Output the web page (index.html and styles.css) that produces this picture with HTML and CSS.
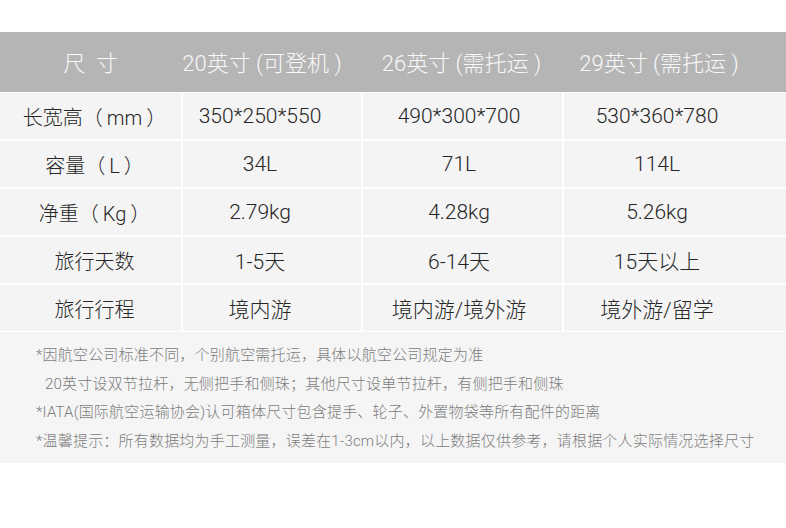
FILE: index.html
```html
<!DOCTYPE html>
<html lang="zh-CN">
<head>
<meta charset="utf-8">
<title>尺寸表</title>
<link rel="stylesheet" href="styles.css">
</head>
<body>
<div class="page">
  <div class="head">
    <div class="hc c1">尺&nbsp;&nbsp;寸</div>
    <div class="hc c2">20英寸 (可登机 )</div>
    <div class="hc c3">26英寸 (需托运 )</div>
    <div class="hc c4">29英寸 (需托运 )</div>
  </div>
  <div class="grid">
    <div class="cell c1">长宽高（&thinsp;mm&thinsp;）</div>
    <div class="cell c2">350*250*550</div>
    <div class="cell c3">490*300*700</div>
    <div class="cell c4">530*360*780</div>

    <div class="cell c1">容量（&thinsp;L&thinsp;）</div>
    <div class="cell c2">34L</div>
    <div class="cell c3">71L</div>
    <div class="cell c4">114L</div>

    <div class="cell c1">净重（&thinsp;Kg&thinsp;）</div>
    <div class="cell c2">2.79kg</div>
    <div class="cell c3">4.28kg</div>
    <div class="cell c4">5.26kg</div>

    <div class="cell c1">旅行天数</div>
    <div class="cell c2">1-5天</div>
    <div class="cell c3">6-14天</div>
    <div class="cell c4">15天以上</div>

    <div class="cell c1">旅行行程</div>
    <div class="cell c2">境内游</div>
    <div class="cell c3">境内游/境外游</div>
    <div class="cell c4">境外游/留学</div>
  </div>
  <div class="notes">
    <p>*因航空公司标准不同，个别航空需托运，具体以航空公司规定为准</p>
    <p class="indent">20英寸设双节拉杆，无侧把手和侧珠；其他尺寸设单节拉杆，有侧把手和侧珠</p>
    <p>*IATA(国际航空运输协会)认可箱体尺寸包含提手、轮子、外置物袋等所有配件的距离</p>
    <p>*温馨提示：所有数据均为手工测量，误差在1-3cm以内，以上数据仅供参考，请根据个人实际情况选择尺寸</p>
  </div>
</div>
</body>
</html>
```

FILE: styles.css
```css
html, body {
  margin: 0;
  padding: 0;
  background: #ffffff;
}

.page {
  width: 786px;
  padding-top: 32px;
  font-family: "Roboto", "Liberation Sans", "Noto Sans CJK SC", sans-serif;
  font-weight: 300;
}

.head {
  display: grid;
  grid-template-columns: 181px 180px 201px 1fr;
  height: 60px;
  background: #b5b5b5;
  margin-bottom: 1px;
}

.hc {
  display: flex;
  align-items: center;
  justify-content: center;
  color: #f8f8f8;
  font-size: 22px;
  padding-bottom: 2px;
  white-space: pre;
}

.hc.c2 { padding-right: 18px; }
.hc.c3 { padding-right: 0; }
.hc.c4 { padding-right: 30px; }

.grid {
  display: grid;
  grid-template-columns: 181px 178px 199px 1fr;
  grid-auto-rows: 46px;
  gap: 2px;
  background: #ffffff;
}

.cell {
  display: flex;
  align-items: center;
  justify-content: center;
  background: #f4f4f4;
  color: #262626;
  font-size: 21px;
  white-space: pre;
}

.cell.c1 { padding-left: 8px; font-size: 20px; }
.cell.c2 { padding-right: 24px; }
.cell.c3 { padding-right: 7px; }
.cell.c4 { padding-right: 36px; }

.notes {
  margin-top: 1px;
  background: #f5f5f5;
  padding: 9px 0 8px 36px;
  color: #7d7d7d;
  font-size: 15px;
  letter-spacing: 0.2px;
}

.notes p {
  margin: 0;
  line-height: 28.5px;
  white-space: nowrap;
}

.notes .indent {
  padding-left: 9px;
}
```
